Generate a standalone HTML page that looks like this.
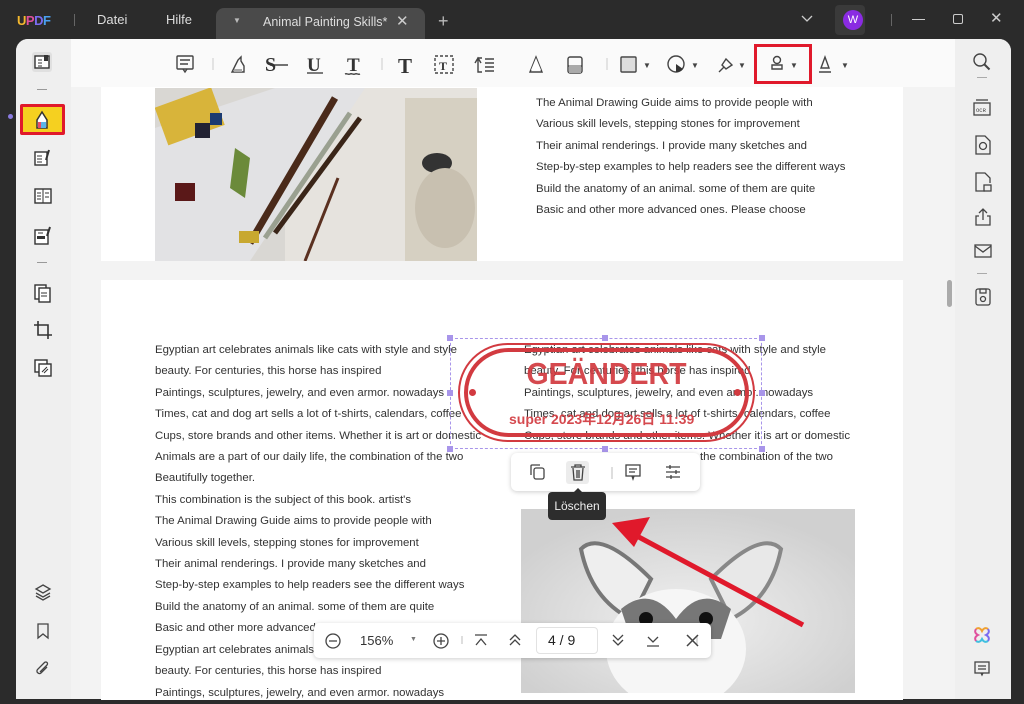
<!DOCTYPE html>
<html><head><meta charset="utf-8"><style>
*{margin:0;padding:0;box-sizing:border-box}
body{width:1024px;height:693px;overflow:hidden;background:#2b2b2b;font-family:"Liberation Sans","Noto Sans CJK SC",sans-serif;position:relative}
.a{position:absolute}
.t{font-size:11.4px;color:#333;line-height:21.4px;white-space:nowrap}
.ic{position:absolute;color:#444}
</style></head><body>
<!-- title bar -->
<div class="a" style="left:17px;top:13px;font-weight:bold;font-size:13px;letter-spacing:-0.5px"><span style="color:#f5b82e">U</span><span style="color:#e04f9d">P</span><span style="color:#7b6cf0">D</span><span style="color:#4aa0f0">F</span></div>
<div class="a" style="left:74px;top:14px;width:1px;height:12px;background:#666"></div>
<div class="a" style="left:97px;top:12px;color:#ddd;font-size:13px">Datei</div>
<div class="a" style="left:166px;top:12px;color:#ddd;font-size:13px">Hilfe</div>
<div class="a" style="left:216px;top:8px;width:209px;height:32px;background:#4a4a4a;border-radius:8px 8px 0 0"></div>
<div class="a" style="left:233px;top:16px;color:#bbb;font-size:8px">▼</div>
<div class="a" style="left:263px;top:15px;color:#ddd;font-size:12.5px">Animal Painting Skills*</div>
<div class="a" style="left:396px;top:12px;color:#ccc;font-size:15px">✕</div>
<div class="a" style="left:438px;top:11px;color:#bbb;font-size:18px">+</div>
<svg class="a" style="left:800px;top:14px" width="14" height="10"><path d="M2 2l5 5 5-5" stroke="#ccc" fill="none" stroke-width="1.3"/></svg>
<div class="a" style="left:835px;top:5px;width:30px;height:30px;background:#3a3a3a;border-radius:4px"></div>
<div class="a" style="left:843px;top:10px;width:20px;height:20px;border-radius:50%;background:#8a2be2;color:#fff;font-size:11px;text-align:center;line-height:20px">W</div>
<div class="a" style="left:891px;top:14px;width:1px;height:12px;background:#666"></div>
<div class="a" style="left:912px;top:19px;width:13px;height:1px;background:#ccc"></div>
<div class="a" style="left:953px;top:14px;width:10px;height:10px;border:1.3px solid #ccc;border-radius:2px"></div>
<div class="a" style="left:990px;top:9px;color:#ccc;font-size:15px">✕</div>

<!-- main frame -->
<div class="a" style="left:16px;top:39px;width:995px;height:660px;background:#f3f3f3;border-radius:12px 12px 0 0;overflow:hidden">
 <div class="a" style="left:0;top:0;width:55px;height:660px;background:#efefef"></div>
 <div class="a" style="left:939px;top:0;width:56px;height:660px;background:#efefef"></div>
 <div class="a" style="left:55px;top:0;width:884px;height:48px;background:#fafafa"></div>
</div>
<div class="a" style="left:8px;top:114px;width:5px;height:5px;border-radius:50%;background:#8a7be0"></div>

<!-- left sidebar icons -->
<div class="a" style="left:32px;top:52px;width:20px;height:20px;background:#e0e0e0;border-radius:3px"></div>
<svg class="a" style="left:33px;top:53px" width="18" height="18"><rect x="2" y="3" width="14" height="12" fill="#fff" stroke="#333" stroke-width="1.4"/><path d="M5 7h4M5 10h4M5 13h4" stroke="#333"/><rect x="11" y="2" width="4" height="6" fill="#333"/></svg>
<div class="a" style="left:37px;top:89px;width:10px;height:1px;background:#999"></div>
<div class="a" style="left:20px;top:104px;width:45px;height:31px;border:3px solid #e0192b;border-radius:2px;background:#f5d020"></div>
<svg class="a" style="left:33px;top:108px" width="18" height="22"><path d="M4 20V12l5-8 5 8v8z" fill="#fff" stroke="#333" stroke-width="1.5"/><rect x="5" y="14" width="8" height="6" fill="#5ab4e8"/><rect x="5" y="14" width="3" height="6" fill="#e84a6a"/></svg>
<svg class="a" style="left:33px;top:148px" width="20" height="20"><rect x="2" y="4" width="12" height="13" fill="#fff" stroke="#333" stroke-width="1.4"/><path d="M4 8h5M4 11h5M4 14h5" stroke="#333"/><path d="M16 2l-3 10" stroke="#333" stroke-width="2"/></svg>
<svg class="a" style="left:33px;top:186px" width="20" height="20"><rect x="2" y="3" width="16" height="14" fill="#fff" stroke="#333" stroke-width="1.4"/><path d="M10 3v14M4 7h4M4 10h4M4 13h4M12 7h4M12 11h4" stroke="#333"/></svg>
<svg class="a" style="left:33px;top:225px" width="20" height="22"><rect x="2" y="5" width="13" height="14" fill="#fff" stroke="#333" stroke-width="1.4"/><rect x="4" y="11" width="8" height="3" fill="#333"/><path d="M5 8h5" stroke="#333"/><path d="M17 2l-3 9" stroke="#333" stroke-width="2"/></svg>
<div class="a" style="left:37px;top:262px;width:10px;height:1px;background:#999"></div>
<svg class="a" style="left:33px;top:282px" width="20" height="22"><rect x="2" y="3" width="11" height="14" fill="#fff" stroke="#333" stroke-width="1.4"/><rect x="6" y="6" width="11" height="14" fill="#fff" stroke="#333" stroke-width="1.4"/><path d="M8 11h6M8 14h6" stroke="#333"/></svg>
<svg class="a" style="left:33px;top:320px" width="20" height="20"><path d="M5 1v14h14M1 5h14v14" fill="none" stroke="#333" stroke-width="1.6"/></svg>
<svg class="a" style="left:33px;top:358px" width="20" height="20"><rect x="2" y="2" width="12" height="12" fill="#fff" stroke="#333" stroke-width="1.4"/><rect x="6" y="6" width="12" height="12" fill="#fff" stroke="#333" stroke-width="1.4"/><path d="M9 14l5-5M11 15l4-4" stroke="#333"/></svg>
<svg class="a" style="left:33px;top:582px" width="20" height="20"><path d="M10 3l7 4-7 4-7-4z" fill="none" stroke="#444" stroke-width="1.3"/><path d="M3 11l7 4 7-4M3 14l7 4 7-4" fill="none" stroke="#444" stroke-width="1.3"/></svg>
<svg class="a" style="left:35px;top:622px" width="16" height="18"><path d="M3 2h10v14l-5-4-5 4z" fill="none" stroke="#444" stroke-width="1.3"/></svg>
<svg class="a" style="left:34px;top:660px" width="18" height="18"><path d="M13 7l-6 6a2.5 2.5 0 01-3.5-3.5l7-7a1.7 1.7 0 012.5 2.5l-7 7" fill="none" stroke="#444" stroke-width="1.3"/></svg>

<!-- top toolbar -->
<svg class="a" style="left:170px;top:50px" width="690" height="30" font-family="Liberation Serif" >
 <g stroke="#444" fill="none" stroke-width="1.4">
  <rect x="7" y="6" width="16" height="13" rx="1"/><path d="M10 10h10M10 14h8M13 19l2 3 2-3"/>
  <path d="M62 22h12v-6l-3-5v-4l-3 3-3 6z"/>
  <path d="M100 15h18"/>
  <path d="M137 23h16"/>
  <path d="M175 24c2-1 3 1 5 0s3 1 5 0 3 1 5 0"/>
  <rect x="265" y="6" width="18" height="17" stroke-dasharray="3 2"/>
  <path d="M312 8h-4v14h4M305 13l3-5 3 5M315 9h9M315 13h9M315 17h9M315 21h9" />
  <path d="M360 22l6-15 6 15z"/>
  <rect x="398" y="7" width="14" height="16" rx="2"/><path d="M398 16h14"/>
  <rect x="451" y="7" width="15" height="15" rx="1"/>
  <circle cx="506" cy="14" r="8"/>
  <path d="M556 9l6 6-6 4-4-4zM554 17l-5 5"/>
  <circle cx="607" cy="10" r="3.5"/><path d="M602 19h10v-4h-10z"/>
  <path d="M649 22h12M651 18l4-11 4 11z"/>
 </g>
 <text x="95" y="21" font-size="20" font-weight="bold" fill="#333">S</text>
 <text x="137" y="21" font-size="19" font-weight="bold" fill="#333">U</text>
 <text x="177" y="21" font-size="19" font-weight="bold" fill="#333">T</text>
 <text x="228" y="23" font-size="21" font-weight="bold" fill="#333">T</text>
 <text x="269" y="20" font-size="12" font-weight="bold" fill="#333">T</text>
 <rect x="399" y="15" width="12" height="8" fill="#aaa"/>
 <rect x="452" y="8" width="13" height="13" fill="#ddd"/>
 <path d="M506 14l7 5a8 8 0 01-7 3z" fill="#333"/>
 <path d="M64 19h8v3h-8z" fill="#aaa"/><path d="M361 20l5-12 5 12z" fill="#fff"/>
 <g fill="#444" font-size="8"><text x="473" y="18">▼</text><text x="521" y="18">▼</text><text x="568" y="18">▼</text><text x="620" y="18">▼</text><text x="671" y="18">▼</text></g>
 <g stroke="#ccc"><path d="M43 8v12M212 8v12M437 8v12"/></g>
</svg>
<div class="a" style="left:754px;top:44px;width:58px;height:40px;border:3px solid #e0192b"></div>

<!-- right sidebar icons -->
<svg class="a" style="left:972px;top:52px" width="20" height="20"><circle cx="8" cy="8" r="6" fill="none" stroke="#444" stroke-width="1.4"/><path d="M12.5 12.5l5 5" stroke="#444" stroke-width="2"/></svg>
<div class="a" style="left:977px;top:77px;width:10px;height:1px;background:#aaa"></div>
<svg class="a" style="left:972px;top:96px" width="20" height="26" stroke="#444" fill="none" stroke-width="1.3"><rect x="2" y="7" width="16" height="12"/><path d="M4 4h12"/><text x="4" y="16" font-size="5.5" fill="#444" stroke="none" font-family="Liberation Mono">OCR</text></svg>
<svg class="a" style="left:973px;top:134px" width="20" height="22" stroke="#444" fill="none" stroke-width="1.3"><path d="M3 2h9l5 5v13H3z"/><circle cx="10" cy="12" r="3.5"/></svg>
<svg class="a" style="left:973px;top:171px" width="20" height="22" stroke="#444" fill="none" stroke-width="1.3"><path d="M12 20H3V2h9l5 5v5"/><rect x="11" y="14" width="7" height="6"/></svg>
<svg class="a" style="left:973px;top:206px" width="20" height="22" stroke="#444" fill="none" stroke-width="1.3"><path d="M10 14V3M6 7l4-4 4 4M6 10H3v9h14v-9h-3"/></svg>
<svg class="a" style="left:973px;top:242px" width="20" height="18" stroke="#444" fill="none" stroke-width="1.3"><rect x="2" y="3" width="16" height="12"/><path d="M2 4l8 6 8-6"/></svg>
<div class="a" style="left:977px;top:273px;width:10px;height:1px;background:#aaa"></div>
<svg class="a" style="left:973px;top:287px" width="20" height="20" stroke="#444" fill="none" stroke-width="1.3"><rect x="3" y="2" width="14" height="16" rx="2"/><rect x="7" y="2" width="6" height="4"/><circle cx="10" cy="12" r="2.5"/></svg>
<svg class="a" style="left:972px;top:625px" width="20" height="20" fill="none" stroke-width="2"><path d="M4 4c3-2 5 0 6 2 1-2 3-4 6-2" stroke="#f0a030"/><path d="M16 4c2 3 0 5-2 6 2 1 4 3 2 6" stroke="#7b6cf0"/><path d="M16 16c-3 2-5 0-6-2-1 2-3 4-6 2" stroke="#40c0e0"/><path d="M4 16c-2-3 0-5 2-6-2-1-4-3-2-6" stroke="#e04f9d"/></svg>
<svg class="a" style="left:973px;top:660px" width="18" height="18" stroke="#444" fill="none" stroke-width="1.3"><rect x="2" y="2" width="14" height="11"/><path d="M5 6h8M5 9h8M8 13l1 2 1-2"/></svg>
<div class="a" style="left:947px;top:280px;width:5px;height:27px;background:#aaa;border-radius:3px"></div>

<!-- page 1 -->
<div class="a" style="left:101px;top:87px;width:802px;height:174px;background:#fff"></div>
<svg class="a" style="left:155px;top:88px" width="322" height="173">
 <rect width="322" height="173" fill="#e6e3de"/>
 <rect x="0" y="0" width="130" height="173" fill="#d9d7d3"/>
 <path d="M0 40L120 0H210L95 173H0z" fill="#e2e2e4"/>
 <rect x="5" y="10" width="60" height="40" fill="#d8b43a" transform="rotate(-20 30 30)"/>
 <rect x="40" y="35" width="15" height="15" fill="#223"/><rect x="55" y="25" width="12" height="12" fill="#1c3b70"/>
 <rect x="20" y="95" width="20" height="18" fill="#5a1818"/>
 <path d="M80 60l15 10-5 40-15-10z" fill="#6b8a3a"/>
 <path d="M95 155L180 10" stroke="#4a2a1a" stroke-width="7"/>
 <path d="M110 150L195 25" stroke="#9aa090" stroke-width="5"/>
 <path d="M120 145L205 30" stroke="#3a2518" stroke-width="5"/>
 <path d="M150 173L183 90" stroke="#5a3020" stroke-width="3"/>
 <rect x="250" y="10" width="72" height="163" fill="#d6d0c2"/>
 <ellipse cx="282" cy="75" rx="15" ry="10" fill="#333"/>
 <ellipse cx="290" cy="120" rx="30" ry="40" fill="#c8c0b0"/>
 <rect x="84" y="143" width="20" height="12" fill="#c8a830"/>
</svg>
<div class="a t" style="left:536px;top:93px">The Animal Drawing Guide aims to provide people with<br>Various skill levels, stepping stones for improvement<br>Their animal renderings. I provide many sketches and<br>Step-by-step examples to help readers see the different ways<br>Build the anatomy of an animal. some of them are quite<br>Basic and other more advanced ones. Please choose</div>

<!-- page 2 -->
<div class="a" style="left:101px;top:280px;width:802px;height:420px;background:#fff"></div>
<div class="a t" style="left:155px;top:340px">Egyptian art celebrates animals like cats with style and style<br>beauty. For centuries, this horse has inspired<br>Paintings, sculptures, jewelry, and even armor. nowadays<br>Times, cat and dog art sells a lot of t-shirts, calendars, coffee<br>Cups, store brands and other items. Whether it is art or domestic<br>Animals are a part of our daily life, the combination of the two<br>Beautifully together.<br>This combination is the subject of this book. artist's<br>The Animal Drawing Guide aims to provide people with<br>Various skill levels, stepping stones for improvement<br>Their animal renderings. I provide many sketches and<br>Step-by-step examples to help readers see the different ways<br>Build the anatomy of an animal. some of them are quite<br>Basic and other more advanced ones. Please choose<br>Egyptian art celebrates animals like cats with style and style<br>beauty. For centuries, this horse has inspired<br>Paintings, sculptures, jewelry, and even armor. nowadays</div>
<div class="a t" style="left:524px;top:340px">Egyptian art celebrates animals like cats with style and style<br>beauty. For centuries, this horse has inspired<br>Paintings, sculptures, jewelry, and even armor. nowadays<br>Times, cat and dog art sells a lot of t-shirts, calendars, coffee<br>Cups, store brands and other items. Whether it is art or domestic<br><span style="padding-left:176px">the combination of the two</span></div>

<!-- dog image -->
<svg class="a" style="left:521px;top:509px" width="334" height="184">
 <defs><radialGradient id="g" cx="0.5" cy="0.6" r="0.6"><stop offset="0" stop-color="#f0f0f0"/><stop offset="1" stop-color="#d0d0d0"/></radialGradient></defs>
 <rect width="334" height="184" fill="url(#g)"/>
 <path d="M60 40q20-20 70 30l-20 40q-40-20-50-70z" fill="#eee" stroke="#777" stroke-width="4"/>
 <path d="M260 40q-20-20-70 30l20 40q40-20 50-70z" fill="#e8e8e8" stroke="#888" stroke-width="4"/>
 <ellipse cx="155" cy="140" rx="70" ry="60" fill="#f6f6f6"/>
 <path d="M100 100q30-25 55 10 25-35 55-10l-10 30h-90z" fill="#777"/>
 <ellipse cx="125" cy="110" rx="7" ry="7" fill="#111"/><ellipse cx="185" cy="110" rx="7" ry="7" fill="#111"/>
 <ellipse cx="153" cy="132" rx="13" ry="9" fill="#0c0c0c"/>
</svg>

<!-- stamp -->
<div class="a" style="left:450px;top:338px;width:312px;height:111px;border:1px dashed #a895ea"></div>
<div class="a" style="left:458px;top:343px;width:297px;height:99px;border:2px solid #d23a40;border-radius:50px"></div>
<div class="a" style="left:464px;top:348px;width:285px;height:89px;border:4px solid #d23a40;border-radius:45px"></div>
<div class="a" style="left:469px;top:389px;width:7px;height:7px;border-radius:50%;background:#d23a40"></div>
<div class="a" style="left:734px;top:389px;width:7px;height:7px;border-radius:50%;background:#d23a40"></div>
<div class="a" style="left:458px;top:356px;width:297px;text-align:center;font-size:31px;font-weight:bold;color:#d23a40;opacity:.92;transform:scaleX(0.92)">GEÄNDERT</div>
<div class="a" style="left:509px;top:409px;font-size:14px;font-weight:bold;color:#d23a40;opacity:.92">super 2023年12月26日 11:39</div>
<div class="a" style="left:447px;top:335px;width:6px;height:6px;background:#a895ea"></div>
<div class="a" style="left:602px;top:335px;width:6px;height:6px;background:#a895ea"></div>
<div class="a" style="left:759px;top:335px;width:6px;height:6px;background:#a895ea"></div>
<div class="a" style="left:447px;top:390px;width:6px;height:6px;background:#a895ea"></div>
<div class="a" style="left:759px;top:390px;width:6px;height:6px;background:#a895ea"></div>
<div class="a" style="left:447px;top:446px;width:6px;height:6px;background:#a895ea"></div>
<div class="a" style="left:602px;top:446px;width:6px;height:6px;background:#a895ea"></div>
<div class="a" style="left:759px;top:446px;width:6px;height:6px;background:#a895ea"></div>

<!-- mini toolbar -->
<div class="a" style="left:511px;top:453px;width:189px;height:38px;background:#fff;border-radius:6px;box-shadow:0 1px 5px rgba(0,0,0,.2)"></div>
<div class="a" style="left:566px;top:461px;width:23px;height:23px;background:#ececec;border-radius:3px"></div>
<svg class="a" style="left:520px;top:461px" width="175" height="22" stroke="#444" fill="none" stroke-width="1.3">
 <rect x="14" y="7" width="10" height="11" rx="2"/><path d="M11 14V5a1 1 0 011-1h8"/>
 <path d="M51 6h14M55 6V4h6v2M53 7l1 12h8l1-12M57 9v8M59 9v8"/>
 <path d="M92 6v12" stroke="#ccc"/><rect x="106" y="4" width="14" height="11"/><path d="M109 8h8M109 11h6M112 15l1 3 1-3"/>
 <path d="M146 6h14M146 11h14M146 16h14"/><path d="M150 4v4M156 9v4M151 14v4"/>
</svg>
<div class="a" style="left:548px;top:492px;width:58px;height:28px;background:#2d2d2d;border-radius:4px;color:#eee;font-size:12px;text-align:center;line-height:28px">Löschen</div>
<div class="a" style="left:574px;top:488px;width:0;height:0;border-left:4px solid transparent;border-right:4px solid transparent;border-bottom:4px solid #2d2d2d"></div>

<!-- red arrow -->
<svg class="a" style="left:600px;top:505px" width="210" height="130"><path d="M203 120L35 30" stroke="#e0192b" stroke-width="5"/><path d="M12 18L50 12 34 42z" fill="#e0192b"/></svg>

<!-- bottom nav -->
<div class="a" style="left:314px;top:623px;width:397px;height:35px;background:#fff;border-radius:5px;box-shadow:0 1px 5px rgba(0,0,0,.2)"></div>
<div class="a" style="left:536px;top:627px;width:62px;height:27px;border:1px solid #e2e2e2;border-radius:4px"></div>
<div class="a" style="left:360px;top:633px;font-size:13px;color:#333">156%</div>
<div class="a" style="left:410px;top:636px;font-size:7px;color:#777">▼</div>
<div class="a" style="left:548px;top:632px;font-size:14px;color:#222">4 / 9</div>
<svg class="a" style="left:314px;top:623px" width="397" height="35" stroke="#444" fill="none" stroke-width="1.3">
 <circle cx="19" cy="18" r="7"/><path d="M15 18h8"/>
 <circle cx="127" cy="18" r="7"/><path d="M123 18h8M127 14v8"/>
 <path d="M148 13v8M383 13v8" stroke="#ccc"/>
 <path d="M161 12h12M162 22l5-6 5 6"/>
 <path d="M196 17l5-5 5 5M196 22l5-5 5 5"/>
 <path d="M299 12l5 5 5-5M299 17l5 5 5-5"/>
 <path d="M334 14l5 5 5-5M333 23h12"/>
 <path d="M373 12l11 11M384 12l-11 11" stroke-width="1.5"/>
</svg>
</body></html>
